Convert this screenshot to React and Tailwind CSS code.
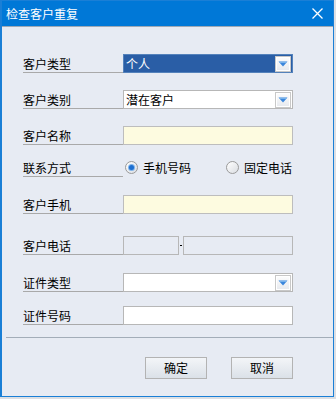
import React from "react";

const font = { fontFamily: '"Noto Sans CJK SC", "Microsoft YaHei", sans-serif' };

function DropBtn() {
  return (
    <div className="w-[16px] h-[16px] border border-[#c8c8c8] bg-gradient-to-b from-[#fdfdfd] to-[#e6e9ee] flex items-center justify-center shadow-[inset_0_0_0_1px_#ffffff]">
      <svg width="10" height="6" viewBox="0 0 10 6">
        <path d="M0.5 0.5 H9.5 L5 5.5 Z" fill="#3a86dc" />
        <path d="M1.2 0.8 H8.8 L8 1.8 H2 Z" fill="#8cc0f0" />
      </svg>
    </div>
  );
}

function Label({ children }) {
  return (
    <div className="w-[100px] h-full border-b border-[#a9a9a9] flex items-end pb-[1px] text-[12px] leading-[14px] text-black">
      {children}
    </div>
  );
}

function Radio({ checked }) {
  return (
    <div className="w-[13px] h-[13px] rounded-full border border-[#9a9a9a] bg-gradient-to-br from-[#ffffff] to-[#dadde2] flex items-center justify-center">
      {checked && <div className="w-[5px] h-[5px] rounded-full bg-[#1e6fd0] shadow-[0_0_0_1px_#7fb3ea]" />}
    </div>
  );
}

export default function App() {
  return (
    <div className="w-[336px] h-[399px] bg-[#dcdfe4]" style={font}>
      <div className="w-[334px] h-[397px] border border-[#1a7fd6] border-l-2 flex flex-col bg-[#e7ebf3]">
        <div className="h-[25px] bg-[#0078d7] flex items-center justify-between pl-[4px] pr-[10px] shrink-0">
          <span className="text-white text-[12px] leading-[14px]">检查客户重复</span>
          <svg width="11" height="11" viewBox="0 0 11 11">
            <path d="M0.5 0.5 L10.5 10.5 M10.5 0.5 L0.5 10.5" stroke="#ffffff" strokeWidth="1.3" />
          </svg>
        </div>
        <div className="h-px bg-[#9ea9b6] shrink-0" />
        <div className="flex flex-col pl-[21px] pt-[27px]">
          {/* row 1 */}
          <div className="flex h-[19px]">
            <Label>客户类型</Label>
            <div className="w-[170px] h-[19px] bg-[#2a5ea6] border border-[#5482bb] flex items-center justify-between pl-[2px] pr-[1px]">
              <span className="text-white text-[12px] leading-[14px]">个人</span>
              <DropBtn />
            </div>
          </div>
          {/* row 2 */}
          <div className="flex h-[19px] mt-[17px]">
            <Label>客户类别</Label>
            <div className="w-[170px] h-[19px] bg-white border border-[#b7b7b7] flex items-center justify-between pl-[2px] pr-[1px]">
              <span className="text-black text-[12px] leading-[14px]">潜在客户</span>
              <DropBtn />
            </div>
          </div>
          {/* row 3 */}
          <div className="flex h-[19px] mt-[17px]">
            <Label>客户名称</Label>
            <div className="w-[170px] h-[19px] bg-[#fdfbe0] border border-[#bdbdbd]" />
          </div>
          {/* row 4 */}
          <div className="flex h-[19px] mt-[13px]">
            <Label>联系方式</Label>
            <div className="w-[170px] h-[19px] flex items-center pl-[2px] text-[12px] leading-[14px] text-black">
              <Radio checked />
              <span className="ml-[5px]">手机号码</span>
              <div className="ml-[35px]"><Radio /></div>
              <span className="ml-[5px]">固定电话</span>
            </div>
          </div>
          {/* row 5 */}
          <div className="flex h-[19px] mt-[18px]">
            <Label>客户手机</Label>
            <div className="w-[170px] h-[19px] bg-[#fdfbe0] border border-[#bdbdbd]" />
          </div>
          {/* row 6 */}
          <div className="flex h-[19px] mt-[22px]">
            <Label>客户电话</Label>
            <div className="w-[170px] h-[19px] flex items-center">
              <div className="w-[56px] h-[19px] border border-[#b7b7b7]" />
              <div className="w-[4px] flex justify-center"><div className="w-[2px] h-px bg-black" /></div>
              <div className="w-[110px] h-[19px] border border-[#b7b7b7]" />
            </div>
          </div>
          {/* row 7 */}
          <div className="flex h-[19px] mt-[18px]">
            <Label>证件类型</Label>
            <div className="w-[170px] h-[19px] bg-white border border-[#b7b7b7] flex items-center justify-end pr-[1px]">
              <DropBtn />
            </div>
          </div>
          {/* row 8 */}
          <div className="flex h-[19px] mt-[14px]">
            <Label>证件号码</Label>
            <div className="w-[170px] h-[19px] bg-white border border-[#b7b7b7]" />
          </div>
        </div>
        <div className="h-px bg-[#a3adb8] mt-[12px] ml-[4px]" />
        <div className="flex justify-end gap-[24px] pr-[40px] mt-[19px]">
          <button className="w-[62px] h-[22px] border border-[#b3b3b3] bg-gradient-to-b from-[#f3f5f8] to-[#dbe1e8] text-[12px] leading-[14px] text-black">确定</button>
          <button className="w-[62px] h-[22px] border border-[#b3b3b3] bg-gradient-to-b from-[#f3f5f8] to-[#dbe1e8] text-[12px] leading-[14px] text-black">取消</button>
        </div>
      </div>
    </div>
  );
}
